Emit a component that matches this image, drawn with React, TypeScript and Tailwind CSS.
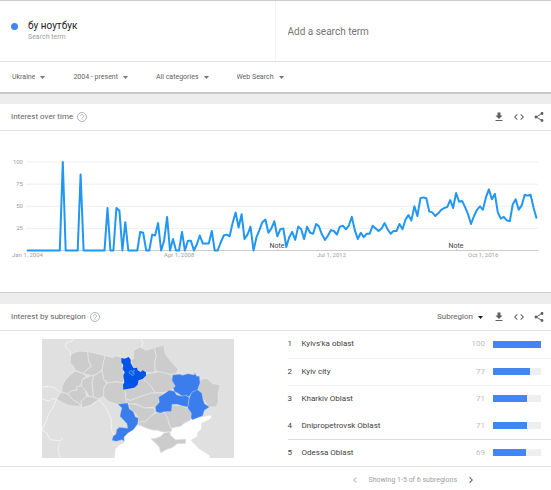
import * as React from 'react';
import {
  MdChevronLeft,
  MdChevronRight,
  MdCode,
  MdFileDownload,
  MdShare,
} from 'react-icons/md';

// Monthly interest, starting January 2004
const INTEREST = [
  0, 0, 0, 0, 0, 0, 0, 0, 0, 0, 0, 0, 100, 0, 0, 0, 0, 0, 86, 0, 0, 0, 0, 0, 0,
  0, 0, 48, 0, 0, 48, 45, 0, 32, 0, 0, 0, 0, 21, 20, 0, 0, 18, 17, 31, 0, 11,
  38, 0, 13, 0, 0, 21, 0, 11, 11, 0, 7, 17, 8, 8, 8, 22, 0, 0, 9, 17, 18, 16,
  31, 43, 26, 41, 13, 18, 27, 0, 15, 23, 32, 35, 20, 25, 33, 16, 24, 25, 4, 15,
  21, 12, 27, 24, 13, 27, 20, 19, 30, 27, 18, 12, 17, 23, 22, 18, 27, 28, 24,
  28, 38, 23, 13, 20, 15, 19, 19, 28, 25, 22, 25, 31, 24, 19, 22, 22, 30, 24,
  35, 40, 34, 50, 39, 59, 60, 59, 44, 43, 39, 42, 46, 48, 49, 57, 48, 65, 55,
  56, 49, 41, 30, 39, 46, 50, 46, 60, 69, 58, 64, 43, 36, 38, 34, 33, 52, 58,
  46, 51, 63, 62, 63, 48, 36,
];

const SUBREGIONS = [
  { name: "Kyivs'ka oblast", value: 100, line: 'border-b border-gray-100' },
  { name: 'Kyiv city', value: 77, line: 'border-b border-gray-100' },
  { name: 'Kharkiv Oblast', value: 71, line: 'border-b border-transparent' },
  { name: 'Dnipropetrovsk Oblast', value: 71, line: 'border-b border-[#e0e0e0]' },
  { name: 'Odessa Oblast', value: 69, line: '' },
];

const FILTERS = [
  { label: 'Location', options: ['Ukraine', 'Worldwide'] },
  { label: 'Time range', options: ['2004 - present', 'Past 12 months'] },
  { label: 'Category', options: ['All categories', 'Shopping'] },
  { label: 'Search type', options: ['Web Search', 'Image Search'] },
];

const OBLASTS = [
  '104,68 112,60 130,54 155,56 158,85 166,100 150,112 142,122 118,112 112,98 102,90', // Volyn
  '155,56 175,60 208,68 203,85 198,110 180,125 165,128 142,122 150,112 166,100 158,85', // Rivne
  '208,68 232,74 238,68 258,74 260,100 265,125 262,150 240,146 218,150 203,140 198,110 203,85', // Zhytomyr
  '284,82 292,78 293,52 312,42 330,52 355,44 361,68 356,90 358,112 350,120 328,118 310,115 303,108 293,106', // Chernihiv
  '355,44 383,36 388,62 404,84 426,108 422,120 405,125 372,120 358,112 356,90 361,68', // Sumy
  '335,122 350,120 372,116 405,125 410,140 418,160 405,172 385,178 358,180 345,160 330,150 322,138 330,125', // Poltava
  '492,140 512,136 530,152 552,155 546,185 548,205 540,222 518,222 500,195 484,172 492,150', // Luhansk
  '266,170 295,164 305,155 308,142 322,138 345,160 358,180 340,182 310,192 285,202 270,200', // Cherkasy
  '270,200 285,202 310,192 345,180 358,180 385,180 370,190 368,208 360,222 325,225 300,212 285,214 272,210', // Kirovohrad
  '203,165 212,150 240,146 262,150 266,170 270,200 272,212 248,214 235,212 215,204 203,190', // Vinnytsia
  '180,125 198,112 203,140 212,150 203,165 203,190 185,198 172,190 168,150 172,130', // Khmelnytskyi
  '138,140 165,128 172,130 168,150 172,192 160,190 148,172 135,162', // Ternopil
  '118,114 142,122 150,130 138,140 135,158 122,162 122,172 110,172 95,182 78,178 78,160 88,142 100,128', // Lviv
  '62,198 75,178 95,182 110,200 128,210 138,225 130,220 100,218 78,208', // Zakarpattia
  '95,182 110,172 122,172 122,162 135,158 148,172 152,190 135,205 138,222 128,210 110,200', // Ivano-Frankivsk
  '135,205 152,190 172,192 190,200 178,206 165,216 138,225', // Chernivtsi
  '275,212 300,214 325,225 355,225 358,238 345,250 330,265 308,270 307,255 298,240 282,228', // Mykolaiv
  '330,265 345,250 358,240 385,238 395,250 400,275 408,290 404,297 379,297 364,292 351,292 331,286 318,280 306,275 308,268', // Kherson
  '385,238 408,216 438,218 455,225 466,240 465,260 445,270 434,280 406,286 400,275 395,255', // Zaporizhzhia
  '344,317 358,316 374,310 384,300 402,296 404,307 419,320 449,318 449,332 424,332 409,344 390,350 374,360 369,342 356,328', // Crimea
];

const ACTIVE_OBLASTS = [
  '410,126 430,124 440,127 456,122 475,126 476,119 482,130 490,130 492,150 484,172 470,176 458,192 450,186 440,190 428,182 415,175 412,165 418,160 408,142',
  '484,170 497,180 500,195 505,212 520,222 505,232 500,248 470,260 465,255 466,240 455,225 460,195 468,178',
  '400,172 415,175 422,186 440,190 448,186 459,194 455,222 438,218 424,214 408,214 406,235 385,236 372,240 360,236 358,222 370,208 368,192 385,182',
  '246,214 275,210 280,228 292,236 298,252 307,255 305,273 292,290 276,300 264,312 265,325 258,320 240,325 228,322 232,308 240,304 242,290 250,283 275,286 273,272 262,260 252,250 255,235 258,225',
];

function HelpIcon() {
  return (
    <svg viewBox="0 0 20 20" className="w-2.5 h-2.5 shrink-0 text-gray-400" fill="none" stroke="currentColor">
      <circle cx="10" cy="10" r="9" strokeWidth="1.6" />
      <path d="M7 8.2a3 3 0 1 1 4.8 2.3c-1 .8-1.8 1.2-1.8 2.3M10 14v1.6" strokeWidth="1.5" />
    </svg>
  );
}

function Dropdown({ label, options, dark = false }: { label: string; options: string[]; dark?: boolean }) {
  return (
    <label className="flex items-center gap-[5px]">
      <select aria-label={label} className="appearance-none bg-transparent field-sizing-content outline-none">
        {options.map((option) => (
          <option key={option}>{option}</option>
        ))}
      </select>
      <svg viewBox="0 0 10 6" className={dark ? 'w-[5px] h-[3px] text-gray-900' : 'w-[5px] h-[3px] text-[#757575]'}>
        <path d="M0 0h10L5 6z" fill="currentColor" />
      </svg>
    </label>
  );
}

function CardHeader({ title, children }: { title: string; children?: React.ReactNode }) {
  return (
    <header className="flex items-center h-[27px] pl-[11px] pr-1.5 border-b border-[#e0e0e0]">
      <h2 className="text-[8px] text-[#616161]">{title}</h2>
      <button type="button" aria-label="Help" className="ml-1">
        <HelpIcon />
      </button>
      <div className="flex items-center gap-2 ml-auto text-[#616161] text-[12px]">
        {children}
        <button type="button" aria-label="Download"><MdFileDownload /></button>
        <button type="button" aria-label="Embed"><MdCode /></button>
        <button type="button" aria-label="Share"><MdShare /></button>
      </div>
    </header>
  );
}

function InterestChart() {
  const baseline = 119.5;
  const points = INTEREST.map(
    (value, i) => `${(27 + i * 2.98).toFixed(1)},${(baseline - value * 0.885).toFixed(1)}`,
  ).join(' ');

  return (
    <svg viewBox="0 0 551 161" className="block w-full h-auto" role="img" aria-label="Interest over time">
      {[100, 75, 50, 25].map((tick) => (
        <g key={tick}>
          <path d={`M26 ${baseline - tick * 0.885}H538`} stroke="#eeeeee" />
          <text x="23" y={baseline + 2 - tick * 0.885} textAnchor="end" fontSize="6" fill="#9e9e9e">
            {tick}
          </text>
        </g>
      ))}
      <path d="M26 119.5H538M277.5 120v-2M456.5 120v-2" stroke="#cccccc" fill="none" />
      <g fontSize="6" fill="#9e9e9e">
        <text x="12" y="126">Jan 1, 2004</text>
        <text x="164" y="126">Apr 1, 2008</text>
        <text x="317" y="126">Jul 1, 2012</text>
        <text x="468" y="126">Oct 1, 2016</text>
      </g>
      <polyline points={points} fill="none" stroke="#2196f3" strokeWidth="2" strokeLinejoin="round" />
      <g fontSize="7" fill="#424242" textAnchor="middle">
        <text x="277" y="117">Note</text>
        <text x="456" y="117">Note</text>
      </g>
    </svg>
  );
}

function UkraineMap() {
  return (
    <svg viewBox="18 18 576 357" className="w-[192px] h-auto" role="img" aria-label="Map of Ukraine">
      <rect x="18" y="18" width="576" height="357" fill="#e0e0e0" />
      {/* Black Sea and Sea of Azov */}
      <polygon
        points="236,375 238,348 250,336 264,330 264,312 276,300 296,280 306,272 331,283 351,290 381,294 404,294 406,286 434,278 469,258 524,247 526,253 519,260 496,270 496,287 484,300 484,310 464,322 474,332 489,347 519,367 522,375"
        fill="#ffffff"
      />
      <g fill="none" stroke="#f5f5f5" strokeWidth="2.5">
        <path d="M104 68L102 54 88 42 92 28 110 24 112 18" />
        <path d="M18 162l20-2 18 5 12 10 8 4M62 198l-14-1-10 7-20-6" />
        <path d="M62 198l-12 28-12 16-8 24-12 24 16 12 8 18 32 4 6-10M70 330l-4 20 6 25" />
        <path d="M190 200l22 26 14 34v30l8 18M293 50l22-4 6-14-4-14M138 225l27-9 25-16" />
      </g>
      <g fill="#cccccc" stroke="#e8e8e8" strokeWidth="2" strokeLinejoin="round">
        {OBLASTS.map((points) => (
          <polygon key={points} points={points} />
        ))}
      </g>
      <g fill="#3b7ded" stroke="#a9c6f5" strokeWidth="1">
        {ACTIVE_OBLASTS.map((points) => (
          <polygon key={points} points={points} />
        ))}
      </g>
      <polygon
        points="256,75 266,77 278,72 284,80 284,90 293,106 303,104 305,112 314,117 320,112 330,118 330,128 320,138 308,142 305,155 295,164 275,168 262,170 261,155 265,148 262,128 266,118 260,108 262,96 256,88"
        fill="#0055e6"
      />
      <path d="M279 117l6-5 4 3 6-4-2 8 2 5-6 5-3-6-6-1zM287 116l5 7" fill="none" stroke="#9fc0fa" strokeWidth="1.6" />
    </svg>
  );
}

export default function App() {
  const [term, setTerm] = React.useState('');

  return (
    <main className="min-h-screen bg-white font-['Roboto',sans-serif] text-[#616161]">
      {/* Search terms and filters */}
      <section className="border-t border-t-[#cccccc] border-b-2 border-b-[#c8c8c8]">
        <div className="grid grid-cols-2 h-[61px] border-b border-[#e0e0e0]">
          <div className="flex gap-[10px] pl-[11px] pt-[19px] border-r border-gray-100">
            <span className="w-[7px] h-[7px] mt-[3px] rounded-full bg-[#4285f4]" />
            <div>
              <h1 className="text-[10px] leading-[12px] text-[#212121]">бу ноутбук</h1>
              <p className="text-[7px] leading-[10px] text-[#9e9e9e]">Search term</p>
            </div>
          </div>
          <input
            type="text"
            aria-label="Add a search term"
            placeholder="Add a search term"
            value={term}
            onChange={(e) => setTerm(e.target.value)}
            className="min-w-0 pl-3 text-[10px] outline-none placeholder:text-[#757575]"
          />
        </div>
        <div className="flex items-center gap-7 h-[30px] pl-3 text-[7px]">
          {FILTERS.map((filter) => (
            <Dropdown key={filter.label} label={filter.label} options={filter.options} />
          ))}
        </div>
      </section>
      <div className="h-[10px] bg-[#ededed]" />

      {/* Interest over time */}
      <section className="border-b border-[#cccccc]">
        <CardHeader title="Interest over time" />
        <InterestChart />
      </section>
      <div className="h-[11px] bg-[#ededed]" />

      {/* Interest by subregion */}
      <section>
        <CardHeader title="Interest by subregion">
          <div className="text-[8px] mr-0.5">
            <Dropdown label="Resolution" options={['Subregion', 'City']} dark />
          </div>
        </CardHeader>
        <div className="grid grid-cols-2 border-b border-[#e0e0e0]">
          <div className="flex items-center justify-center">
            <UkraineMap />
          </div>
          <div className="pl-3">
            <table className="w-full border-collapse text-[8px] text-[#424242]">
              <tbody>
                {SUBREGIONS.map((region, i) => (
                  <tr key={region.name} className={`h-[27px] ${region.line}`}>
                    <td className="w-[14px] p-0">{i + 1}</td>
                    <th scope="row" className="p-0 text-left font-normal">{region.name}</th>
                    <td className="p-0 pr-2 text-right text-[#bdbdbd]">{region.value}</td>
                    <td className="w-[58px] p-0 pr-[10px]">
                      <div className="h-[7px] bg-[#eeeeee]">
                        <div className="h-full bg-[#4285f4]" style={{ width: `${region.value}%` }} />
                      </div>
                    </td>
                  </tr>
                ))}
              </tbody>
            </table>
          </div>
        </div>
        <footer className="flex items-center justify-end gap-2 h-[26px] pr-[74px] text-[7px] text-[#9e9e9e]">
          <button type="button" aria-label="Previous page" disabled className="text-[12px] text-[#bdbdbd]">
            <MdChevronLeft />
          </button>
          Showing 1-5 of 6 subregions
          <button type="button" aria-label="Next page" className="text-[12px] text-[#616161]">
            <MdChevronRight />
          </button>
        </footer>
      </section>
    </main>
  );
}
